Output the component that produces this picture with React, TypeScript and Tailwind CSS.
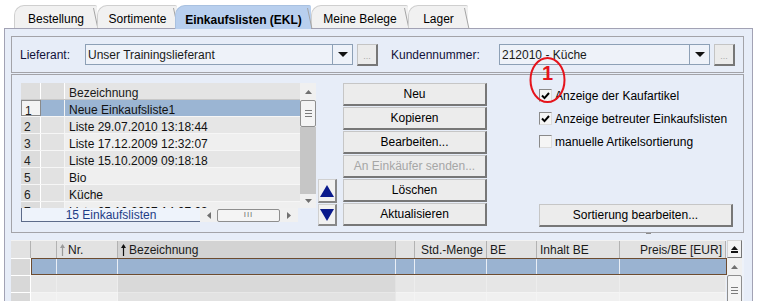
import React from "react";

type Tab = { label: string; cls: string; active?: boolean };

const tabs: Tab[] = [
  { label: "Bestellung", cls: "ml-[14px] w-[83px]" },
  { label: "Sortimente", cls: "w-[80px]" },
  { label: "Einkaufslisten (EKL)", cls: "-ml-[2px] w-[136px]", active: true },
  { label: "Meine Belege", cls: "w-[97px]" },
  { label: "Lager", cls: "w-[60px]" },
];

const lists = [
  "Neue Einkaufsliste1",
  "Liste 29.07.2010 13:18:44",
  "Liste 17.12.2009 12:32:07",
  "Liste 15.10.2009 09:18:18",
  "Bio",
  "Küche",
  "Liste 25.10.2007 14:07:03",
];

type Col = { w: string; label: string; arrow?: "gray" | "black"; sorted?: boolean; right?: boolean };

const cols: Col[] = [
  { w: "w-[20px]", label: "" },
  { w: "w-[26px]", label: "" },
  { w: "w-[61px]", label: "Nr.", arrow: "gray" },
  { w: "w-[278px]", label: "Bezeichnung", arrow: "black", sorted: true },
  { w: "w-[19px]", label: "" },
  { w: "w-[72px]", label: "Std.-Menge", right: true },
  { w: "w-[50px]", label: "BE" },
  { w: "w-[83px]", label: "Inhalt BE" },
  { w: "w-[106px]", label: "Preis/BE [EUR]", right: true },
];

const TriUp = ({ c = "#707070" }: { c?: string }) => (
  <svg width="7" height="4"><path d="M0 4h7L3.5 0z" fill={c} /></svg>
);
const TriDown = ({ c = "#707070" }: { c?: string }) => (
  <svg width="7" height="4"><path d="M0 0h7L3.5 4z" fill={c} /></svg>
);

function TabStrip() {
  return (
    <div className="flex h-[28px] items-end">
      {tabs.map((t) => (
        <div
          key={t.label}
          className={`${t.cls} relative flex items-center justify-center rounded-tl-[10px] rounded-tr-[2px] border-t border-l pt-[4px] ${
            t.active
              ? "z-10 -mb-[1px] h-[24px] border-[#a9c1e0] bg-[#b8cfee] font-bold"
              : "h-[23px] border-[#cfcfcf] bg-[#f1f1f1]"
          }`}
        >
          <span>{t.label}</span>
          <svg className="absolute right-[-2px] top-[2px]" width="6" height="21">
            <line x1="0.5" y1="0" x2="5" y2="21" stroke="#a4a4a4" />
          </svg>
        </div>
      ))}
    </div>
  );
}

function Combo({ value, w }: { value: string; w: string }) {
  return (
    <div className="flex items-center">
      <div className={`${w} flex h-[21px] items-center border border-[#8da0b6] bg-[#eef2f9] pl-[2px] text-[#1a1a1a]`}>
        {value}
      </div>
      <div className="flex h-[21px] w-[20px] items-center justify-center border border-l-0 border-[#8da0b6] bg-[#eef2f9]">
        <svg width="10" height="5"><path d="M0 0h10L5 5z" fill="#111" /></svg>
      </div>
      <div className="ml-[4px] flex h-[22px] w-[21px] items-end justify-center border border-[#c4c4c4] border-r-2 border-b-2 border-r-[#777] border-b-[#777] bg-[#ebebeb] pb-[3px] text-[9px] leading-none text-[#a8a8a8]">
        ...
      </div>
    </div>
  );
}

function Btn({ label, disabled }: { label: string; disabled?: boolean }) {
  return (
    <div
      className={`flex h-[23px] w-[144px] items-center justify-center border border-[#c6c6c6] border-r-2 border-b-2 border-r-[#777] border-b-[#777] bg-[#ececec] ${
        disabled ? "text-[#a6a6a6]" : "text-black"
      }`}
    >
      {label}
    </div>
  );
}

function Check({ checked, label }: { checked?: boolean; label: string }) {
  return (
    <div className="flex h-[13px] items-center gap-[3px]">
      <div className="flex h-[13px] w-[13px] items-center justify-center border border-[#8a8a8a] border-r-[#dcdcdc] border-b-[#dcdcdc] bg-[#f5f5f5]">
        {checked && (
          <svg width="9" height="8">
            <path d="M1 3.5l2.5 2.6L8 1" stroke="#000" strokeWidth="2" fill="none" />
          </svg>
        )}
      </div>
      <span className="text-black">{label}</span>
    </div>
  );
}

function ListTable() {
  return (
    <div className="flex w-[295px] flex-col">
      <div className="flex h-[125px]">
        <div className="flex w-[279px] flex-col">
          <div className="flex h-[17px] border-b border-[#c8c8c8]">
            <div className="w-[20px] border-r border-white bg-[#dedede]" />
            <div className="w-[24px] border-r border-white bg-[#dedede]" />
            <div className="flex flex-1 items-start bg-[#e4e4e4] pl-[4px] pt-[4px] text-[#1a1a1a]">Bezeichnung</div>
          </div>
          <div className="flex flex-1 flex-col overflow-hidden">
            {lists.map((l, i) => {
              const sel = i === 0;
              const bg = sel ? "bg-[#9bb5d3]" : i % 2 === 1 ? "bg-[#e6e6e6]" : "bg-[#efefef]";
              return (
                <div key={l} className="flex h-[17px] shrink-0 border-b border-[#f6f6f6]">
                  <div
                    className={`flex w-[20px] items-start pl-[3px] pt-[4px] text-[#222] ${
                      sel ? "border border-[#8a8a8a] bg-[#f3f3f3]" : "border-r border-white bg-[#dcdcdc]"
                    }`}
                  >
                    {i + 1}
                  </div>
                  <div className={`w-[24px] border-r border-[#f4f4f4] ${sel ? "bg-[#9bb5d3]" : "bg-[#e2e2e2]"}`} />
                  <div className={`flex flex-1 items-start pl-[4px] pt-[4px] text-[#111] ${bg}`}>{l}</div>
                </div>
              );
            })}
          </div>
        </div>
        <div className="flex w-[16px] flex-col bg-[#f0f0f0]">
          <div className="flex h-[17px] items-center justify-center">
            <TriUp />
          </div>
          <div className="flex h-[27px] flex-col items-center justify-center gap-[2px] rounded-[2px] border border-[#8e8e8e] bg-[#f4f4f4]">
            <div className="h-px w-[7px] bg-[#7a7a7a]" />
            <div className="h-px w-[7px] bg-[#7a7a7a]" />
            <div className="h-px w-[7px] bg-[#7a7a7a]" />
          </div>
          <div className="flex-1 bg-[#c6c6c6]" />
          <div className="flex h-[14px] items-center justify-center">
            <TriDown />
          </div>
        </div>
      </div>
      <div className="flex h-[14px]">
        <div className="flex w-[179px] items-center justify-center border-l border-b border-[#5d6b8a] bg-[#eef3fb] pt-[1px] text-[#1e3c86]">
          15 Einkaufslisten
        </div>
        <div className="flex w-[98px] items-center bg-[#f0f0f0]">
          <div className="flex w-[17px] items-center justify-center">
            <svg width="4" height="7"><path d="M4 0v7L0 3.5z" fill="#707070" /></svg>
          </div>
          <div className="flex h-[13px] w-[63px] items-center justify-center rounded-[2px] border border-[#8e8e8e] bg-[#f4f4f4] text-[8px] leading-none tracking-[1px] text-[#707070]">
            III
          </div>
          <div className="flex flex-1 items-center justify-center">
            <svg width="4" height="7"><path d="M0 0v7L4 3.5z" fill="#707070" /></svg>
          </div>
        </div>
      </div>
    </div>
  );
}

function ArrowBtn({ up, h }: { up?: boolean; h: string }) {
  return (
    <div className={`${h} flex w-[19px] items-center justify-center border border-[#d0d0d0] border-r-2 border-b-2 border-r-[#888] border-b-[#888] bg-[#f1f1f1]`}>
      <svg width="14" height="12">
        <path d={up ? "M0 12h14L7 0z" : "M0 0h14L7 12z"} fill="#0a1a8c" />
      </svg>
    </div>
  );
}

function ArrowIcon({ c }: { c: string }) {
  return (
    <svg width="5" height="12" className="mr-[3px]">
      <path d="M2.5 1v11" stroke={c} strokeWidth="1.2" />
      <path d="M0 4L2.5 0L5 4z" fill={c} />
    </svg>
  );
}

function BottomTable() {
  return (
    <div className="flex w-[733px]">
      <div className="flex flex-col">
        <div className="flex h-[18px] border-t border-[#f2f2f2]">
          {cols.map((c, i) => (
            <div
              key={i}
              className={`${c.w} flex items-center border-r border-[#b2b2b2] ${c.sorted ? "bg-[#d3d3d3]" : "bg-[#e2e2e2]"} ${
                c.right ? "justify-end pr-[3px]" : "pl-[3px]"
              } text-[#1a1a1a]`}
            >
              {c.arrow && <ArrowIcon c={c.arrow === "gray" ? "#9a9a9a" : "#111"} />}
              {c.label}
            </div>
          ))}
        </div>
        <div className="flex h-[17px]">
          <div className="w-[20px] border-r border-t border-white bg-[#d8d8d8]" />
          <div className="flex border border-[#6d4c30] bg-[#9ab3d1]">
            {cols.slice(1).map((c, i) => (
              <div key={i} className={`${i === 0 ? "w-[25px]" : c.w} border-r border-[#e9eef5] last:border-r-0`} />
            ))}
          </div>
        </div>
        {[0, 1].map((r) => (
          <div key={r} className="flex h-[17px]">
            {cols.map((c, i) => (
              <div
                key={i}
                className={`${c.w} border-r border-t ${
                  i === 0
                    ? "border-white bg-[#d8d8d8]"
                    : c.sorted
                    ? r === 0
                      ? "border-[#e2e2e2] bg-[#d9d9d9]"
                      : "border-[#e8e8e8] bg-[#e2e2e2]"
                    : r === 0
                    ? "border-[#ededed] bg-[#e6e6e6]"
                    : "border-[#f4f4f4] bg-[#f0f0f0]"
                }`}
              />
            ))}
          </div>
        ))}
      </div>
      <div className="flex w-[17px] flex-col bg-[#eef2f9]">
        <div className="flex h-[18px] w-[15px] flex-col items-center justify-center border border-[#d4d4d4] border-r-[#777] border-b-[#777] bg-[#f2f2f2]">
          <TriUp c="#111" />
          <div className="mt-[1px] h-[2px] w-[7px] bg-[#111]" />
        </div>
        <div className="flex w-[15px] flex-col bg-[#f0f0f0]">
          <div className="flex h-[17px] items-center justify-center">
            <TriUp />
          </div>
          <div className="flex h-[30px] flex-col items-center justify-center gap-[2px] rounded-[2px] border border-[#8e8e8e] bg-[#f4f4f4]">
            <div className="h-px w-[7px] bg-[#7a7a7a]" />
            <div className="h-px w-[7px] bg-[#7a7a7a]" />
            <div className="h-px w-[7px] bg-[#7a7a7a]" />
          </div>
        </div>
      </div>
    </div>
  );
}

export default function App() {
  return (
    <div className="relative h-[301px] w-[757px] overflow-hidden bg-white font-['Liberation_Sans',Arial,sans-serif] text-[12px] leading-none text-black">
      <TabStrip />
      <div className="ml-[4px] h-[280px] w-[749px] border border-[#a2a2b4] bg-[#e7edf8] pl-[6px] pt-[7px]">
        {/* Lieferant / Kundennummer */}
        <div className="flex h-[37px] w-[733px] items-center border border-[#a3a3a8] pl-[8px]">
          <span className="w-[65px] text-[#12123a]">Lieferant:</span>
          <Combo value="Unser Trainingslieferant" w="w-[248px]" />
          <span className="ml-[13px] w-[108px] text-[#12123a]">Kundennummer:</span>
          <Combo value="212010 - Küche" w="w-[191px]" />
        </div>

        {/* Einkaufslisten */}
        <div className="relative mt-[1px] flex h-[159px] w-[733px] border border-[#a3a3a8] pl-[9px] pt-[8px]">
          <ListTable />
          <div className="ml-[2px] flex flex-col">
            <div className="mt-[96px]">
              <ArrowBtn up h="h-[24px]" />
            </div>
            <div className="mt-[1px]">
              <ArrowBtn h="h-[22px]" />
            </div>
          </div>
          <div className="ml-[6px] flex flex-col gap-[1px]">
            <Btn label="Neu" />
            <Btn label="Kopieren" />
            <Btn label="Bearbeiten..." />
            <Btn label="An Einkäufer senden..." disabled />
            <Btn label="Löschen" />
            <Btn label="Aktualisieren" />
          </div>
          <div className="ml-[52px] flex h-[144px] w-[194px] flex-col pt-[6px]">
            <div className="flex flex-col gap-[10px]">
              <Check checked label="Anzeige der Kaufartikel" />
              <Check checked label="Anzeige betreuter Einkaufslisten" />
              <Check label="manuelle Artikelsortierung" />
            </div>
            <div className="mt-auto flex h-[23px] items-center justify-center border border-[#c6c6c6] border-r-2 border-b-2 border-r-[#777] border-b-[#777] bg-[#ececec]">
              Sortierung bearbeiten...
            </div>
          </div>
          <div className="absolute bottom-[-2px] left-[634px] h-px w-[5px] bg-[#8a8a8a]" />
        </div>

        <div className="mt-[7px]">
          <BottomTable />
        </div>
      </div>

      {/* annotation */}
      <svg className="absolute left-[528px] top-[56px]" width="40" height="50">
        <ellipse cx="19.5" cy="24" rx="17" ry="22" fill="none" stroke="#e5141c" strokeWidth="2" />
      </svg>
      <span className="absolute left-[542px] top-[63px] text-[20px] font-bold leading-none text-[#e5141c]">1</span>
    </div>
  );
}
